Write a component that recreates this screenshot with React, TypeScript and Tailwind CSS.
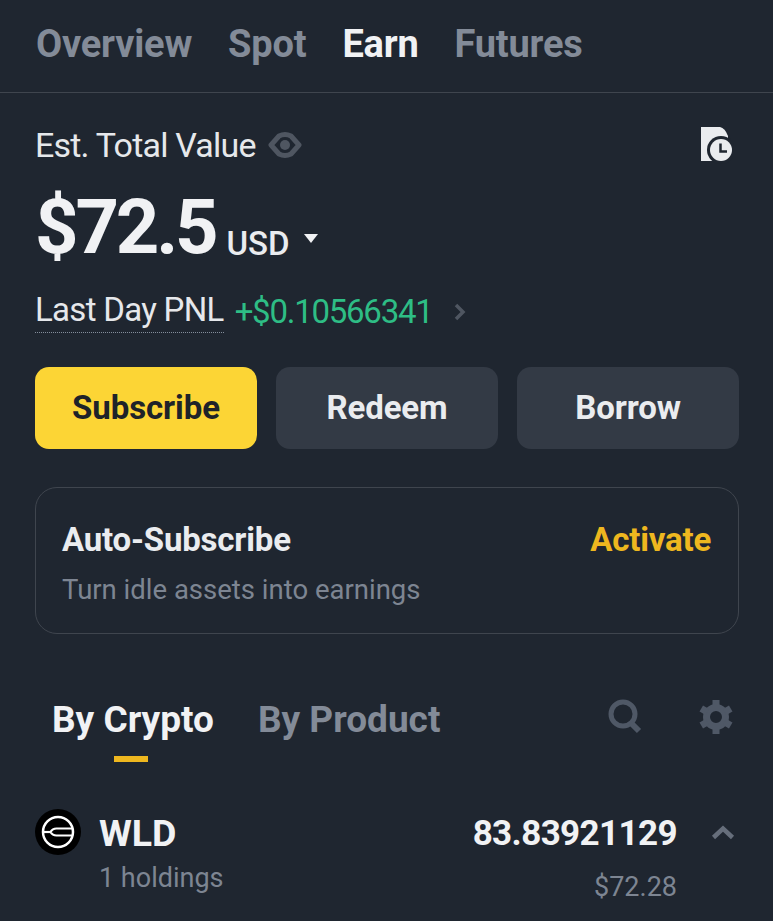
import React from 'react';

const tabs = ['Overview', 'Spot', 'Earn', 'Futures'];

const EyeIcon = () => (
  <svg width="34" height="28" viewBox="0 0 34 28" className="text-[#4f5661]">
    <path d="M3 14 L11 5 Q17 2 23 5 L31 14 L23 23 Q17 26 11 23 Z" fill="none" stroke="currentColor" strokeWidth="5" strokeLinejoin="round" />
    <circle cx="17" cy="14" r="5" fill="currentColor" />
  </svg>
);

const HistoryIcon = () => (
  <svg width="34" height="38" viewBox="0 0 34 38">
    <path d="M1 1 H20 Q25 2 28 10 V35 H1 Z" fill="#eaecef" />
    <circle cx="21" cy="24" r="14" fill="#1f2630" />
    <circle cx="21" cy="24" r="11" fill="#eaecef" />
    <path d="M20.5 17.5 V25.5 H27" fill="none" stroke="#1f2630" strokeWidth="2.5" />
  </svg>
);

const SearchIcon = () => (
  <svg width="36" height="36" viewBox="0 0 36 36" className="text-[#4f5866]">
    <circle cx="16" cy="15" r="12" fill="none" stroke="currentColor" strokeWidth="5" />
    <path d="M24 24 L32 32" stroke="currentColor" strokeWidth="6" />
  </svg>
);

const GearIcon = () => (
  <svg width="36" height="36" viewBox="0 0 36 36" className="text-[#4f5866]">
    <circle cx="18" cy="18" r="9.5" fill="none" stroke="currentColor" strokeWidth="7" />
    <g fill="currentColor">
      <rect x="14.5" y="1" width="7" height="7" />
      <rect x="14.5" y="28" width="7" height="7" />
      <rect x="14.5" y="1" width="7" height="7" transform="rotate(60 18 18)" />
      <rect x="14.5" y="1" width="7" height="7" transform="rotate(120 18 18)" />
      <rect x="14.5" y="1" width="7" height="7" transform="rotate(240 18 18)" />
      <rect x="14.5" y="1" width="7" height="7" transform="rotate(300 18 18)" />
    </g>
  </svg>
);

const WldLogo = () => (
  <svg width="46" height="46" viewBox="0 0 46 46" className="shrink-0">
    <circle cx="23" cy="23" r="23" fill="#000" />
    <circle cx="23" cy="23" r="15" fill="none" stroke="#fff" strokeWidth="2.5" />
    <path d="M37.5 19.5 H22 A7 7 0 0 0 15.5 23 A7 7 0 0 0 22 26.5 H37.5" fill="none" stroke="#fff" strokeWidth="2.2" />
    <path d="M8.5 23 H15.5" stroke="#fff" strokeWidth="2.2" />
  </svg>
);

const App = () => {
  return (
    <div className="w-[773px] h-[921px] overflow-hidden bg-[#1f2630] font-['Roboto',sans-serif] text-[#eaecef]">
      {/* Top tabs */}
      <div className="flex gap-9 h-[93px] pl-9 pt-5 border-b border-[#3f454e]">
        {tabs.map((tab) => (
          <div
            key={tab}
            className={`text-[38px] leading-[48px] font-bold tracking-[-0.2px] ${tab === 'Earn' ? 'text-[#f1f2f4]' : 'text-[#838b98]'}`}
          >
            {tab}
          </div>
        ))}
      </div>

      <div className="px-[35px]">
        {/* Value */}
        <div className="flex items-center justify-between pt-[32px]">
          <div className="flex items-center gap-[12px]">
            <span className="text-[34px] leading-[40px] tracking-[-0.8px] text-[#e6e8eb]">Est. Total Value</span>
            <EyeIcon />
          </div>
          <div className="mr-[4px]">
            <HistoryIcon />
          </div>
        </div>

        <div className="flex items-end mt-[18px]">
          <span className="text-[76px] leading-[88px] font-bold tracking-[-3.2px] text-[#f1f2f4]">$72.5</span>
          <span className="ml-[11px] mb-[7px] text-[33px] leading-[40px] font-medium">USD</span>
          <span className="ml-[14px] mb-[28px] w-0 h-0 border-x-[7px] border-x-transparent border-t-[9px] border-t-[#f1f2f4]" />
        </div>

        <div className="flex items-center mt-[19px]">
          <span className="text-[33px] leading-[40px] tracking-[-0.7px] text-[#e6e8eb] border-b border-dotted border-[#848e9c] pb-[2px]">Last Day PNL</span>
          <span className="ml-[11px] text-[33px] leading-[40px] tracking-[-1.25px] text-[#2ebd85]">+$0.10566341</span>
          <svg width="14" height="20" viewBox="0 0 14 20" className="ml-[20px]">
            <path d="M3 3 L10 10 L3 17" fill="none" stroke="#4f5661" strokeWidth="3.5" />
          </svg>
        </div>

        {/* Actions */}
        <div className="grid grid-cols-3 gap-[19px] mt-[34px] w-[704px]">
          <button className="h-[82px] rounded-[14px] bg-[#fcd535] text-[#1e2329] text-[33px] font-bold tracking-[-0.1px]">Subscribe</button>
          <button className="h-[82px] rounded-[14px] bg-[#333a45] text-[#eaecef] text-[33px] font-bold tracking-[-0.1px]">Redeem</button>
          <button className="h-[82px] rounded-[14px] bg-[#333a45] text-[#eaecef] text-[33px] font-bold tracking-[-0.1px]">Borrow</button>
        </div>

        {/* Auto-Subscribe */}
        <div className="flex items-start justify-between w-[704px] h-[147px] mt-[38px] pl-[26px] pr-[27px] pt-[30px] rounded-[22px] border border-[#3f454e]">
          <div>
            <div className="text-[33px] leading-[44px] font-bold tracking-[-0.2px] text-[#eaecef]">Auto-Subscribe</div>
            <div className="mt-[10px] text-[27.5px] leading-[36px] text-[#7d8592]">Turn idle assets into earnings</div>
          </div>
          <div className="text-[33px] leading-[44px] font-bold tracking-[-0.2px] text-[#eeb71f]">Activate</div>
        </div>

        {/* Sub tabs */}
        <div className="flex items-start justify-between mt-[62px] w-[699px]">
          <div className="flex gap-[44px] pl-[17px]">
            <div className="flex flex-col items-center">
              <span className="text-[37px] leading-[48px] font-bold text-[#f1f2f4]">By Crypto</span>
              <span className="mt-[12px] mr-[4px] w-[34px] h-[6px] bg-[#eeb71f]" />
            </div>
            <span className="text-[37px] leading-[48px] font-bold text-[#838b98]">By Product</span>
          </div>
          <div className="flex gap-[55px] mt-[3px]">
            <SearchIcon />
            <GearIcon />
          </div>
        </div>

        {/* WLD row */}
        <div className="flex mt-[37px] w-[704px]">
          <div className="mt-[10px]">
            <WldLogo />
          </div>
          <div className="ml-[19px] mt-[11px]">
            <div className="-ml-[1px] text-[37.5px] leading-[46px] font-bold text-[#f1f2f4]">WLD</div>
            <div className="-ml-[1px] mt-[4px] text-[27px] leading-[36px] text-[#7d8592]">1 holdings</div>
          </div>
          <div className="ml-auto mt-[12px] flex flex-col items-end">
            <div className="text-[35px] leading-[46px] font-bold tracking-[-0.6px] text-[#f1f2f4]">83.83921129</div>
            <div className="mt-[12px] text-[27px] leading-[36px] text-[#7d8592]">$72.28</div>
          </div>
          <svg width="24" height="16" viewBox="0 0 24 16" className="ml-[34px] mr-[4px] mt-[25px] shrink-0">
            <path d="M2.5 13.5 L12 4.5 L21.5 13.5" fill="none" stroke="#666e7b" strokeWidth="4.5" />
          </svg>
        </div>
      </div>
    </div>
  );
};

export default App;
